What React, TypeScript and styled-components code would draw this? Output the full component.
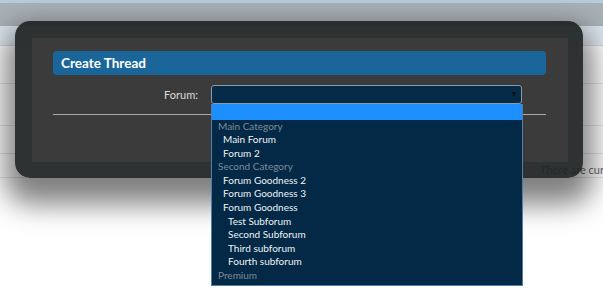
import React from "react";
import styled, { createGlobalStyle } from "styled-components";

const Global = createGlobalStyle`
  html, body { margin: 0; padding: 0; background: #ffffff; }
  body { font-family: Lato, "Open Sans", Arial, sans-serif; overflow: hidden; }
  #root { width: 603px; height: 300px; position: relative; overflow: hidden; }
`;

const Page = styled.div`
  width: 603px;
  height: 300px;
  display: flex;
  flex-direction: column;
  background: #fff;
`;

const TopStrip = styled.div`
  height: 3px;
  background: #b7cbdb;
`;

const HeaderBand = styled.div`
  height: 23px;
  background: #a8b1b6;
`;

const NavBand = styled.div`
  height: 19px;
  background: linear-gradient(#dae5ee, #e6edf3);
  border-bottom: 1px solid #d6dde3;
`;

const Row = styled.div<{ $h: number }>`
  height: ${(p) => p.$h}px;
  border-bottom: 1px solid #e3e6e9;
  box-sizing: border-box;
  display: flex;
  align-items: flex-start;
`;

const StatusText = styled.div`
  padding-left: 540px;
  padding-top: 9px;
  white-space: nowrap;
  font-size: 11px;
  color: #666;
`;

const Modal = styled.div`
  position: absolute;
  left: 15px;
  top: 21px;
  width: 568px;
  height: 157px;
  box-sizing: border-box;
  padding: 17px 15px 16px 17px;
  border-radius: 15px;
  background: rgba(30, 34, 35, 0.93);
  box-shadow: 0 16px 28px 10px rgba(0, 0, 0, 0.5);
`;

const Panel = styled.div`
  height: 100%;
  background: #3b3b3b;
  padding: 13px 22px 0 21px;
  box-sizing: border-box;
  display: flex;
  flex-direction: column;
`;

const TitleBar = styled.div`
  height: 24px;
  border-radius: 4px;
  background: #1a669b;
  display: flex;
  align-items: center;
  padding-left: 8px;
  color: #ffffff;
  font-weight: 700;
  font-size: 13.5px;
`;

const FormRow = styled.div`
  margin-top: 10px;
  display: flex;
  align-items: center;
  position: relative;
`;

const Label = styled.div`
  width: 145px;
  text-align: right;
  font-size: 11px;
  color: #dcdcdc;
  padding-right: 13px;
`;

const Select = styled.div`
  width: 311px;
  height: 19px;
  box-sizing: border-box;
  background: #052b48;
  border: 1px solid #8c9aa4;
  border-radius: 3px;
  display: flex;
  align-items: center;
  justify-content: flex-end;
  padding-right: 5px;
`;

const Arrow = styled.div`
  width: 0;
  height: 0;
  border-left: 2.5px solid transparent;
  border-right: 2.5px solid transparent;
  border-top: 5px solid #0b0f14;
`;

const Divider = styled.div`
  margin-top: 10px;
  height: 1px;
  background: #a9abab;
`;

const List = styled.div`
  position: absolute;
  left: 158px;
  top: 19px;
  width: 312px;
  height: 182px;
  box-sizing: border-box;
  background: #032946;
  border: 1px solid #4f7fa6;
  border-top: none;
  font-size: 10px;
  z-index: 2;
`;

const Option = styled.div<{ $kind: "blank" | "group" | "item" | "sub" }>`
  height: ${(p) => (p.$kind === "blank" ? 15.5 : 13.6)}px;
  line-height: ${(p) => (p.$kind === "blank" ? 15.5 : 13.6)}px;
  background: ${(p) => (p.$kind === "blank" ? "#1e8ffe" : "transparent")};
  color: ${(p) => (p.$kind === "group" ? "#7b8b99" : "#eef3f7")};
  padding-left: ${(p) =>
    p.$kind === "group" ? 6 : p.$kind === "item" ? 11 : 16}px;
  white-space: nowrap;
`;

const options: { t: string; k: "group" | "item" | "sub" }[] = [
  { t: "Main Category", k: "group" },
  { t: "Main Forum", k: "item" },
  { t: "Forum 2", k: "item" },
  { t: "Second Category", k: "group" },
  { t: "Forum Goodness 2", k: "item" },
  { t: "Forum Goodness 3", k: "item" },
  { t: "Forum Goodness", k: "item" },
  { t: "Test Subforum", k: "sub" },
  { t: "Second Subforum", k: "sub" },
  { t: "Third subforum", k: "sub" },
  { t: "Fourth subforum", k: "sub" },
  { t: "Premium", k: "group" },
];

export default function App() {
  return (
    <>
      <Global />
      <Page>
        <TopStrip />
        <HeaderBand />
        <NavBand />
        <Row $h={38} />
        <Row $h={42} />
        <Row $h={28} />
        <Row $h={24}>
          <StatusText>There are currently 1 users online</StatusText>
        </Row>
      </Page>
      <Modal>
        <Panel>
          <TitleBar>Create Thread</TitleBar>
          <FormRow>
            <Label>Forum:</Label>
            <Select>
              <Arrow />
            </Select>
            <List>
              <Option $kind="blank" />
              {options.map((o) => (
                <Option key={o.t} $kind={o.k}>
                  {o.t}
                </Option>
              ))}
            </List>
          </FormRow>
          <Divider />
        </Panel>
      </Modal>
    </>
  );
}
